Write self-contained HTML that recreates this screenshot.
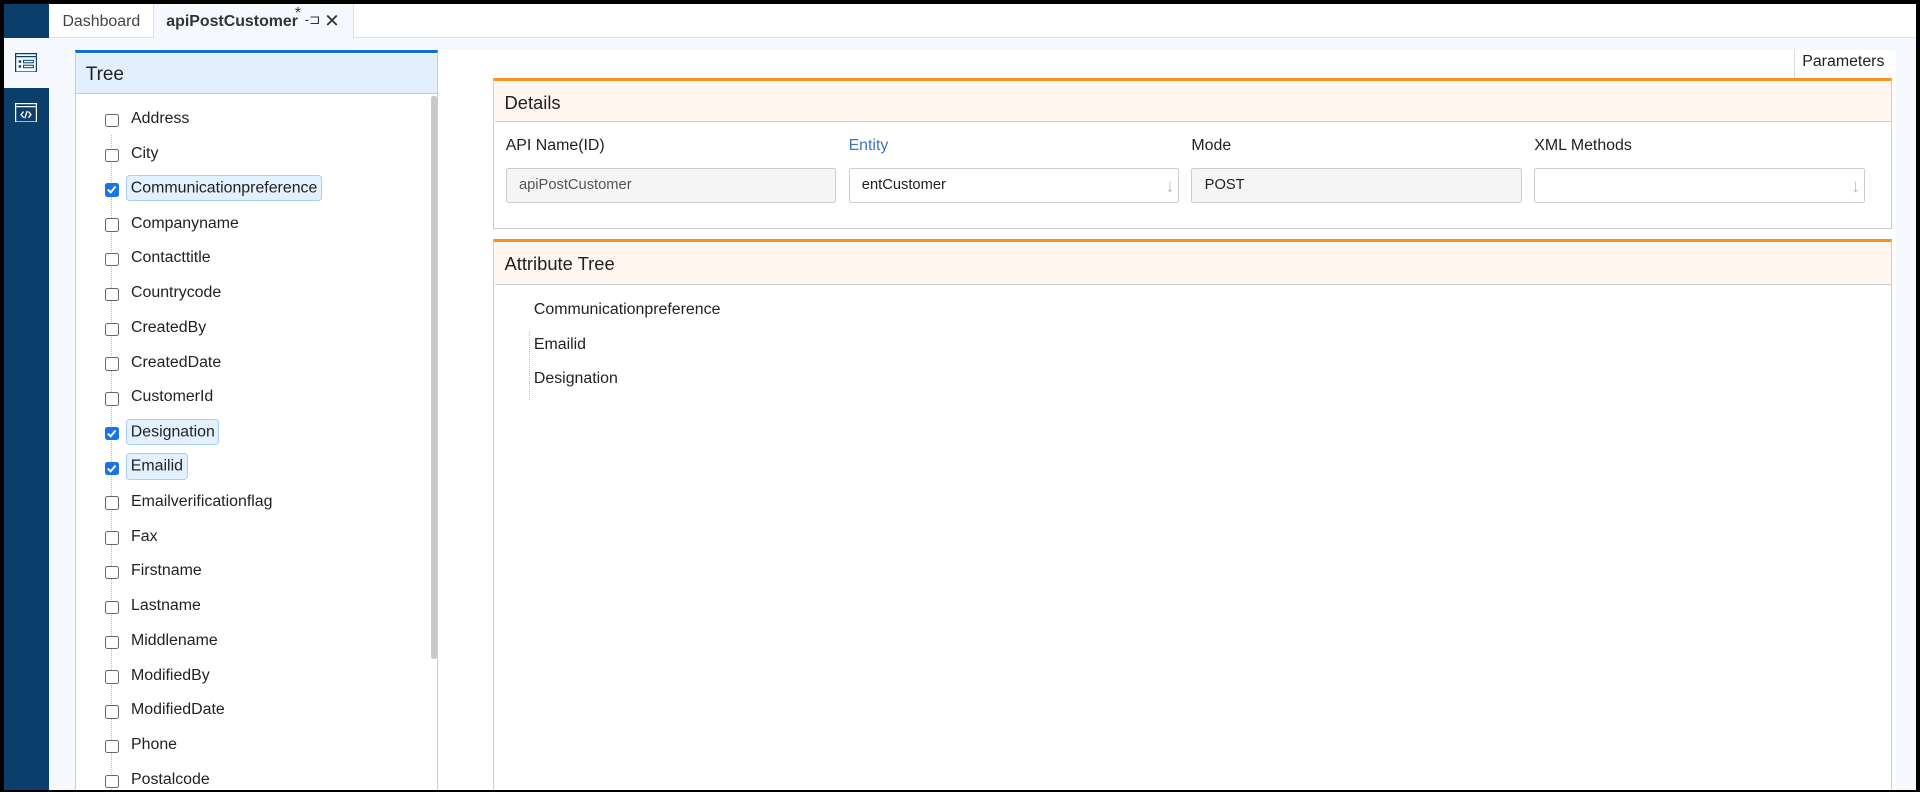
<!DOCTYPE html>
<html><head><style>
html,body{margin:0;padding:0;width:1920px;height:792px;overflow:hidden;background:#000}
#w{zoom:1.22449;width:1568px;height:647px;position:relative;overflow:hidden;background:#000;font-family:"Liberation Sans",Arial,sans-serif;color:#222}
.a{position:absolute;box-sizing:border-box}
.cb{position:absolute;width:11px;height:11px;border:1px solid #666;border-radius:2px;background:#fff;box-sizing:border-box}
.cb.on{background:#1a73e8;border-color:#1a73e8}
.it{position:absolute;font-size:13px;white-space:nowrap}
.sel{background:#e3f0fd;border:1px solid #a9cff3;border-radius:3px;padding:3px 3px;margin-left:-4px;margin-top:-3px}
.lbl{position:absolute;font-size:13px}
.inp{position:absolute;height:29px;border:1px solid #ccc;border-radius:2px;font-size:12px;padding:7px 10px;box-sizing:border-box}
</style></head><body><div id="w">
<div class="a" style="left:3px;top:3px;width:1562px;height:642px;background:#f5f8fc"></div>
<div class="a" style="left:3px;top:3px;width:37px;height:642px;background:#0c3e6c"></div>
<div class="a" style="left:3px;top:31px;width:37px;height:41px;background:#f5f8fc"></div>
<svg class="a" style="left:12px;top:43px" width="18" height="16" viewBox="0 0 18 16"><rect x=".5" y=".5" width="17" height="15" fill="none" stroke="#0c3e6c"/><line x1="1" y1="3" x2="17" y2="3" stroke="#0c3e6c"/><rect x="3" y="6" width="2" height="2" fill="#0c3e6c"/><rect x="3" y="10" width="2" height="2" fill="#0c3e6c"/><rect x="7" y="6" width="8" height="2" fill="none" stroke="#0c3e6c" stroke-width=".8"/><rect x="7" y="10" width="8" height="2" fill="none" stroke="#0c3e6c" stroke-width=".8"/></svg>
<svg class="a" style="left:12px;top:84px" width="18" height="16" viewBox="0 0 18 16"><rect x=".5" y=".5" width="17" height="15" fill="none" stroke="#fff"/><line x1="1" y1="3" x2="17" y2="3" stroke="#fff"/><path d="M7 7L5 9.5L7 12M11 7L13 9.5L11 12M10 6.5L8 12.5" stroke="#fff" fill="none" stroke-width="1.1"/></svg>
<div class="a" style="left:40px;top:3px;width:1525px;height:28px;background:#fff;border-bottom:1px solid #dde3ea"></div>
<div class="a" style="left:40px;top:3px;width:85px;height:28px;font-size:13px;color:#444;padding:8px 0 0 11px">Dashboard</div>
<div class="a" style="left:125px;top:3px;width:164px;height:28px;background:#f5f8fc;border-left:1px solid #dde3ea;border-right:1px solid #dde3ea;font-size:13px;font-weight:bold;color:#333;padding:8px 0 0 10px">apiPostCustomer<span style="position:absolute;left:115px;top:1px;font-weight:normal">*</span><span style="position:absolute;left:123px;top:7px;font-weight:normal;font-size:11px">-⊐</span><span style="position:absolute;left:139px;top:5px;font-weight:normal;font-size:15px">✕</span></div>
<div class="a" style="left:61px;top:41px;width:297px;height:610px;background:#fff;border:1px solid #ccc;border-top:3px solid #0a6fd6"></div>
<div class="a" style="left:62px;top:44px;width:295px;height:33px;background:#e3effc;border-bottom:1px solid #ccc;font-size:15.5px;padding:8px 0 0 8px">Tree</div>
<div class="a" style="left:352px;top:78px;width:5px;height:460px;background:#c8c8c8;border-radius:2px"></div>
<div class="a" style="left:91px;top:110px;width:0;height:540px;border-left:1px dotted #bbb"></div>
<div id="tree"></div>
<div class="a" style="left:372px;top:335px;width:17px;height:16px;background:#1a7fa8;border-radius:2px;color:#fff;font-size:14px;line-height:14px;text-align:center">»</div>
<div class="a" style="left:358px;top:41px;width:1190px;height:610px;background:#fff"></div>
<div class="a" style="left:1465px;top:40px;width:80px;height:24px;border-left:1px solid #ddd;font-size:13px;padding:3px 0 0 6px">Parameters</div>
<div class="a" style="left:403px;top:64px;width:1142px;height:123px;border:1px solid #ccc;border-top:3px solid #f7931e"></div>
<div class="a" style="left:404px;top:67px;width:1140px;height:33px;background:#fff6f0;border-bottom:1px solid #ccc;font-size:15px;padding:8px 0 0 8px">Details</div>
<div class="lbl" style="left:413px;top:112px">API Name(ID)</div>
<div class="lbl" style="left:693px;top:112px;color:#3a78b5">Entity</div>
<div class="lbl" style="left:973px;top:112px">Mode</div>
<div class="lbl" style="left:1253px;top:112px">XML Methods</div>
<div class="inp" style="left:413px;top:137px;width:270px;background:#f5f5f5;color:#555">apiPostCustomer</div>
<div class="inp" style="left:693px;top:137px;width:270px;background:#fff">entCustomer<span style="position:absolute;right:3px;top:5px;color:#bbb;font-size:15px">↓</span></div>
<div class="inp" style="left:973px;top:137px;width:270px;background:#f5f5f5">POST</div>
<div class="inp" style="left:1253px;top:137px;width:270px;background:#fff"><span style="position:absolute;right:3px;top:5px;color:#bbb;font-size:15px">↓</span></div>
<div class="a" style="left:403px;top:195px;width:1142px;height:460px;border:1px solid #ccc;border-top:3px solid #f7931e"></div>
<div class="a" style="left:404px;top:198px;width:1140px;height:35px;background:#fff6f0;border-bottom:1px solid #ccc;font-size:15px;padding:9px 0 0 8px">Attribute Tree</div>
<div class="it" style="left:436px;top:246px">Communicationpreference</div>
<div class="a" style="left:432px;top:270px;height:57px;border-left:1px dotted #bbb"></div>
<div class="it" style="left:436px;top:274px">Emailid</div>
<div class="it" style="left:436px;top:302px">Designation</div>
<div class="a" style="left:0;top:0;width:1568px;height:647px;border:3px solid #000;border-top-width:2px;border-bottom-width:2px"></div>
</div>
<script>
var n=["Address","City","Communicationpreference","Companyname","Contacttitle","Countrycode","CreatedBy","CreatedDate","CustomerId","Designation","Emailid","Emailverificationflag","Fax","Firstname","Lastname","Middlename","ModifiedBy","ModifiedDate","Phone","Postalcode"];
var on={"Communicationpreference":1,"Designation":1,"Emailid":1},h="";
n.forEach(function(s,i){var y=98+i*28.4;
h+='<div class="cb'+(on[s]?' on':'')+'" style="left:86px;top:'+(y-5)+'px">'+(on[s]?'<svg width="9" height="9" style="position:absolute;left:0;top:0"><path d="M1.5 4.5L3.8 6.8L7.8 2" stroke="#fff" stroke-width="1.6" fill="none"/></svg>':'')+'</div>';
h+='<div class="it" style="left:107px;top:'+(y-8)+'px"><span class="'+(on[s]?'sel':'')+'">'+s+'</span></div>';});
document.getElementById("tree").outerHTML=h;
</script>
</body></html>
